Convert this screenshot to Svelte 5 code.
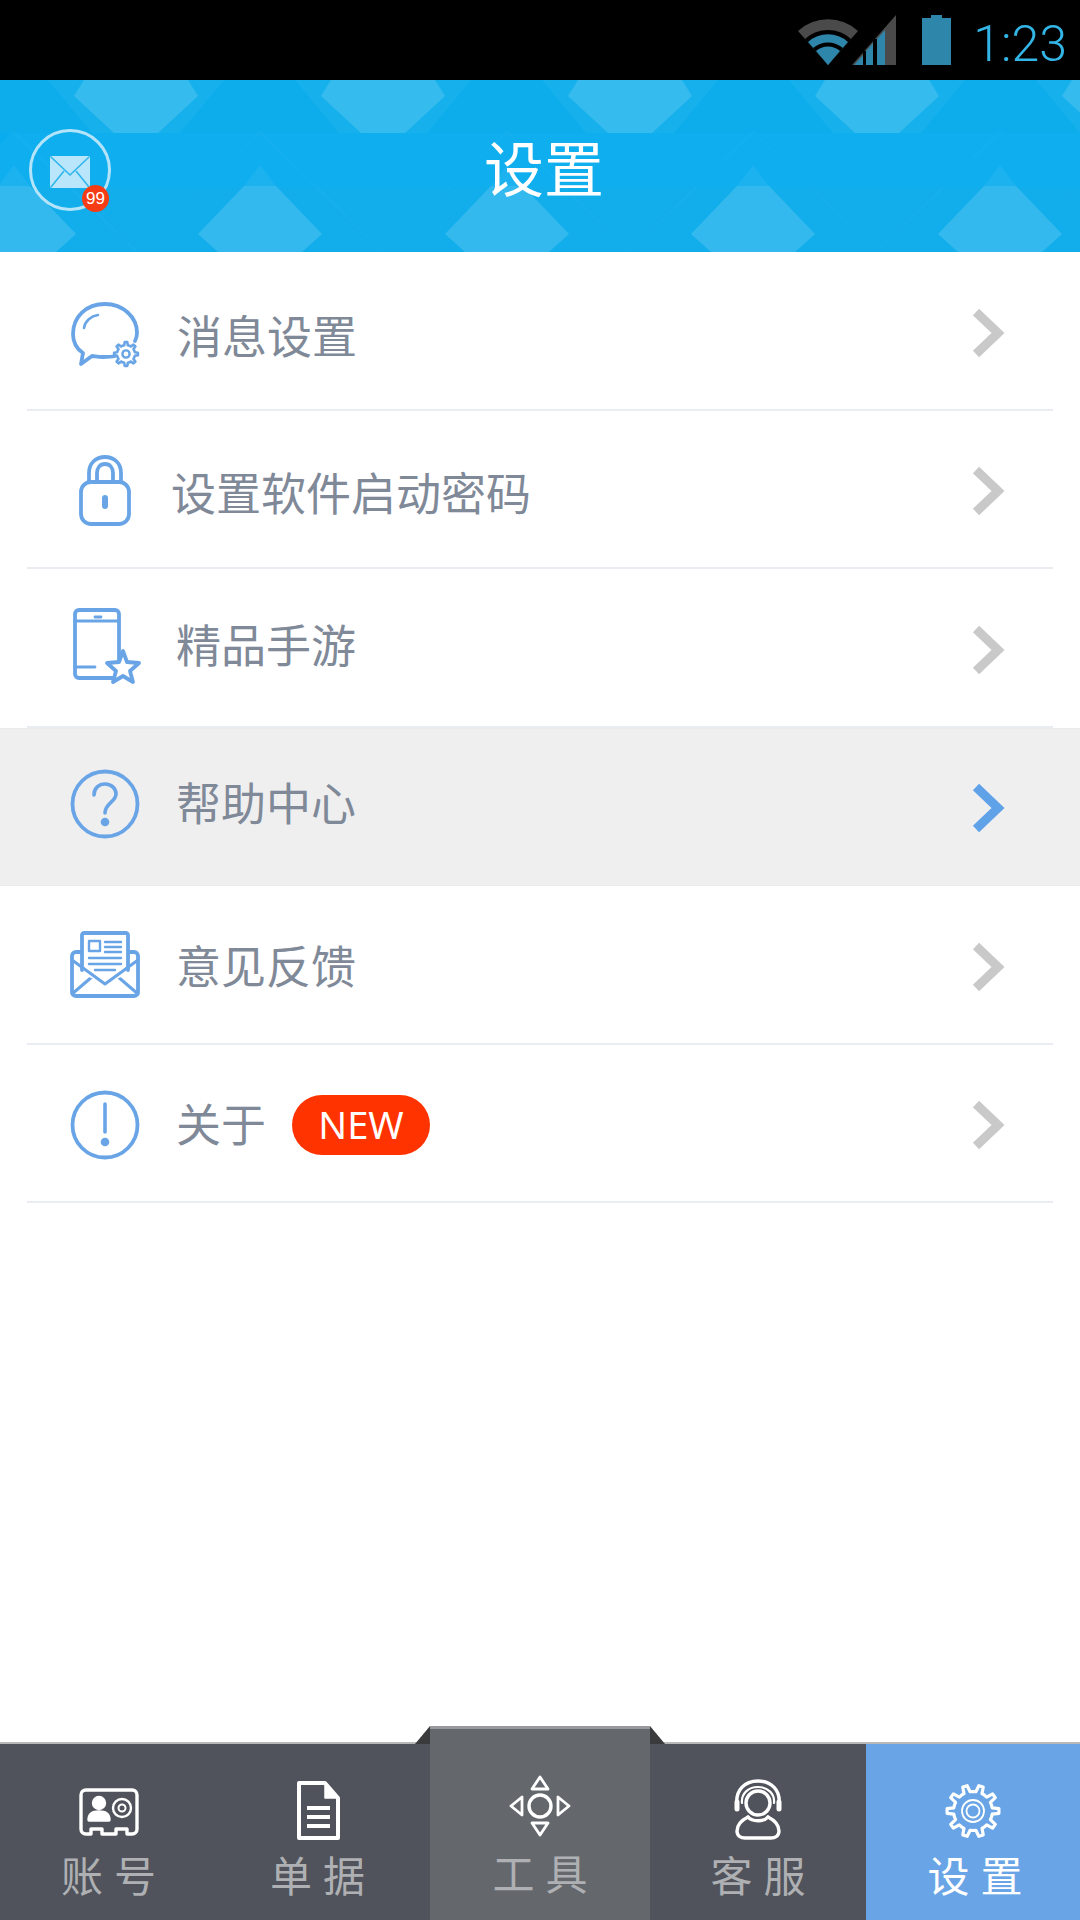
<script>
	const rows = [
		{ icon: 'chat', label: '消息设置', nudge: 2, textY: 2, iconY: 4 },
		{ icon: 'lock', label: '设置软件启动密码', nudge: -4, textY: 1, iconY: 0 },
		{ icon: 'phone', label: '精品手游', nudge: 1, textY: -6, iconY: -5 },
		{ icon: 'help', label: '帮助中心', nudge: 1, textY: -6, iconY: -4, active: true },
		{ icon: 'mail', label: '意见反馈', nudge: 1, textY: -2, iconY: -1 },
		{ icon: 'info', label: '关于', nudge: 1, textY: -2, iconY: 0, badge: 'NEW' }
	];

	const tabs = [
		{ icon: 'account', label: '账号', dx: 1 },
		{ icon: 'doc', label: '单据', dx: -5 },
		{ icon: 'tool', label: '工具', dx: 0, raised: true },
		{ icon: 'service', label: '客服', dx: 0 },
		{ icon: 'gear', label: '设置', dx: 2, current: true }
	];

	const topHexes = [136, 383, 630, 877, 1124];
	const lowHexes = [14, 260, 507, 753, 1000];

	function gearPath(cx, cy, outer, inner, teeth) {
		let d = '';
		const step = (Math.PI * 2) / teeth;
		for (let i = 0; i < teeth; i++) {
			const a = i * step;
			const pts = [
				[inner, a - step * 0.5],
				[inner, a - step * 0.26],
				[outer, a - step * 0.14],
				[outer, a + step * 0.14],
				[inner, a + step * 0.26]
			];
			for (const [r, t] of pts) {
				d += (d ? 'L' : 'M') + (cx + r * Math.cos(t)).toFixed(1) + ' ' + (cy + r * Math.sin(t)).toFixed(1);
			}
		}
		return d + 'Z';
	}
</script>

<div class="screen">
	<div class="status">
		<svg class="wifi" width="60" height="50" viewBox="0 0 60 50">
			<path d="M30 50 L0 16 A44 44 0 0 1 60 16 Z" fill="#4a4a4a" />
			<path d="M30 50 L7 24 A34 34 0 0 1 53 24 Z" fill="#000" />
			<path d="M30 50 L10 27 A30 30 0 0 1 50 27 Z" fill="#2f86ab" />
			<path d="M30 50 L15 33 A23 23 0 0 1 45 33 Z" fill="#000" />
			<path d="M30 50 L18 36 A18 18 0 0 1 42 36 Z" fill="#2f86ab" />
		</svg>
		<svg class="signal" width="44" height="50" viewBox="0 0 44 50">
			<path d="M0 50 L44 0 V50 Z" fill="#4a4a4a" />
			<path d="M2 50 L11 40 V50Z M14 50 V36 L21 28 V50Z M25 50 V24 L33 15 V50Z" fill="#2f86ab" />
			<path d="M11 50h3V36h-3Z M21 50h4V24h-4Z" fill="#000" />
		</svg>
		<div class="battery"></div>
		<span class="time">1:23</span>
	</div>

	<header class="head">
		<svg class="pattern" width="1080" height="172" viewBox="0 0 1080 172">
			<rect y="53" width="1080" height="54" fill="#00aef4" opacity="0.3" />
			{#each topHexes as x}
				<polygon points="{x - 124},53 {x},172 {x + 124},53" fill="#fff" opacity="0.025" />
				<polygon points="{x - 88},0 {x + 88},0 {x + 44},53 {x - 44},53" fill="#fff" opacity="0.04" />
				<polygon points="{x - 52},0 {x + 52},0 {x + 62},16 {x + 22},53 {x - 22},53 {x - 62},16" fill="#fff" opacity="0.14" />
			{/each}
			{#each lowHexes as x}
				<polygon points="{x - 124},172 {x},50 {x + 124},172" fill="#fff" opacity="0.025" />
				<polygon points="{x},85 {x + 16},106 {x - 16},106" fill="#fff" opacity="0.06" />
				<polygon points="{x - 16},106 {x + 16},106 {x + 62},154 {x + 42},172 {x - 42},172 {x - 62},154" fill="#fff" opacity="0.14" />
			{/each}
		</svg>
		<button class="inbox" aria-label="消息">
			<svg width="100" height="100" viewBox="0 0 100 100">
				<circle cx="42" cy="42" r="39.5" fill="none" stroke="#b4e4f9" stroke-width="3" />
				<rect x="22" y="28" width="40" height="32" rx="2" fill="#b9e6fa" />
				<path d="M23 29 L42 47 L61 29 M23 59 L36 43 M61 59 L48 43" fill="none" stroke="#2fb6ef" stroke-width="1.6" />
			</svg>
			<span class="dot">99</span>
		</button>
		<h1>设置</h1>
	</header>

	<main class="list">
		{#each rows as row}
			<div class="row" class:active={row.active}>
				<div class="row-inner">
					<svg class="row-icon" style:transform="translateY({row.iconY}px)" width="80" height="80" viewBox="0 0 80 80" fill="none" stroke="#69a5e6" stroke-width="3.8" stroke-linecap="round" stroke-linejoin="round">
						{#if row.icon === 'chat'}
							<path d="M50 59 C46 60 42 60 38 60 C33 60 29 59 27 59 L16 67 L18 56 C12 52 8 45 8 37 C8 20 21 7 40 7 C58 7 72 20 72 36 C72 39 71 42 70 44" />
							<path d="M19 31 C20 24 26 19 33 18" stroke-width="2.6" />
							<path d={gearPath(61, 57, 12, 9, 8)} stroke-width="2.6" />
							<circle cx="61" cy="57" r="3.6" stroke-width="2.4" />
						{:else if row.icon === 'lock'}
							<rect x="16" y="31" width="48" height="42" rx="10" />
							<path d="M24 31 V22 C24 12 31 6 40 6 C49 6 56 12 56 22 V31" />
							<path d="M32 31 V22 C32 17 35 13 40 13 C45 13 48 17 48 22 V31" />
							<path d="M40 47 V55" stroke-width="6" />
						{:else if row.icon === 'phone'}
							<rect x="10" y="5" width="44" height="68" rx="4" />
							<path d="M10 16 H54 M10 62 H30 M30 12h6" stroke-width="2.8" />
							<path fill="#fff" d="M58 46 L62 57 L74 58 L65 66 L68 77 L58 71 L48 77 L51 66 L42 58 L54 57 Z" />
						{:else if row.icon === 'help'}
							<circle cx="40" cy="40" r="32.5" />
							<path d="M29 31 C29 24 34 20 40 20 C47 20 51 25 51 30 C51 38 40 39 40 49" stroke-width="3.6" />
							<circle cx="40" cy="58" r="2.4" fill="#69a5e6" />
						{:else if row.icon === 'mail'}
							<rect x="7" y="26" width="66" height="44" rx="4" />
							<path d="M7 68 L28 50 M73 68 L52 50" stroke-width="3" />
							<path fill="#fff" d="M17 48 V9 C17 8 18 7 19 7 H61 C62 7 63 8 63 9 V48 L40 58 Z" stroke="none" />
							<path d="M17 44 V9 C17 8 18 7 19 7 H61 C62 7 63 8 63 9 V44" />
							<rect x="24" y="15" width="11" height="10" stroke-width="2.4" />
							<path d="M40 16 H56 M40 21 H56 M40 26 H56 M24 32 H56 M24 38 H56 M30 44 H50" stroke-width="2.4" />
							<path d="M7 34 L40 58 L73 34" stroke-width="3" />
						{:else if row.icon === 'info'}
							<circle cx="40" cy="40" r="32.5" />
							<path d="M40 19 V47" stroke-width="3.6" />
							<circle cx="40" cy="57" r="2.4" fill="#69a5e6" />
						{/if}
					</svg>
					<span class="label" style:margin-left="{row.nudge}px" style:transform="translateY({row.textY}px)">{row.label}</span>
					{#if row.badge}
						<span class="new">{row.badge}</span>
					{/if}
					<svg class="chevron" width="36" height="54" viewBox="0 0 36 54">
						<path d="M6 6 L28 27 L6 48" fill="none" stroke={row.active ? '#5fa2e8' : '#c9c9c9'} stroke-width="9" />
					</svg>
				</div>
			</div>
		{/each}
	</main>

	<nav class="tabs">
		{#each tabs as tab}
			<div class="tab" class:raised={tab.raised} class:current={tab.current}>
				<div class="tab-body" style:transform="translateX({tab.dx}px)">
					<svg width="80" height="70" viewBox="0 0 80 70" fill="none" stroke="#fff" stroke-width="3.4" stroke-linecap="round" stroke-linejoin="round">
						{#if tab.icon === 'account'}
							<path d="M17 14 H63 C66 14 68 16 68 19 V53 C68 56 66 58 63 58 H58 V53 H47 V58 H33 V53 H22 V58 H17 C14 58 12 56 12 53 V19 C12 16 14 14 17 14 Z" />
							<circle cx="30" cy="27" r="5.5" fill="#fff" />
							<path d="M20 44 C20 37 25 36 30 36 C35 36 40 37 40 44 Z" fill="#fff" />
							<circle cx="53" cy="32" r="9" stroke-width="2.4" />
							<circle cx="53" cy="32" r="3.5" stroke-width="2" />
						{:else if tab.icon === 'doc'}
							<path d="M21 7 H47 L60 22 V62 H21 Z" stroke-width="4" />
							<path d="M47 7 V22 H60" stroke-width="1.5" fill="#fff" />
							<path d="M29 32 H52 M29 41 H52 M29 50 H52" stroke-width="4" stroke-linecap="butt" />
						{:else if tab.icon === 'tool'}
							<circle cx="40" cy="32" r="11" />
							<path d="M40 3 L48 15 H32 Z M40 61 L48 49 H32 Z M11 32 L22 23 V41 Z M69 32 L58 23 V41 Z" stroke-width="2.8" />
						{:else if tab.icon === 'service'}
							<circle cx="40" cy="27" r="12" />
							<path d="M19 29 C17 14 27 5 40 5 C53 5 63 14 61 29" />
							<path d="M24 27 C23 18 30 11 40 11 C50 11 57 18 56 27" stroke-width="2.2" />
							<path d="M19 26 V33 M61 26 V33" stroke-width="5" />
							<path d="M30 41 C22 45 19 50 19 55 C19 60 23 62 27 62 H53 C57 62 61 60 61 55 C61 50 58 45 50 41" />
							<path d="M30 41 C34 46 46 46 50 41" />
						{:else if tab.icon === 'gear'}
							<path d={gearPath(38, 35, 26, 19.5, 10)} stroke-width="3.2" />
							<circle cx="38" cy="35" r="11" stroke-width="1.8" />
							<circle cx="38" cy="35" r="6.5" stroke-width="1.8" />
						{/if}
					</svg>
					<span class="tab-label">{tab.label}</span>
				</div>
			</div>
		{/each}
	</nav>
</div>

<style>
	:global(body) {
		margin: 0;
		background: #fff;
	}

	.screen {
		width: 1080px;
		height: 1920px;
		display: flex;
		flex-direction: column;
		overflow: hidden;
		font-family: 'Noto Sans CJK SC', 'Noto Sans', sans-serif;
	}

	.status {
		height: 80px;
		flex: none;
		box-sizing: border-box;
		background: #000;
		display: flex;
		align-items: flex-start;
		justify-content: flex-end;
		padding: 15px 13px 0 0;
	}

	.wifi {
		margin-right: -6px;
	}

	.battery {
		position: relative;
		width: 29px;
		height: 47px;
		margin: 3px 0 0 26px;
		background: #2f86ab;
	}

	.battery::before {
		content: '';
		position: absolute;
		top: -3px;
		left: 9px;
		width: 11px;
		height: 3px;
		background: #2f86ab;
	}

	.time {
		margin-left: 22px;
		font-family: Roboto, sans-serif;
		font-weight: 300;
		font-size: 50px;
		line-height: 58px;
		color: #33b5e5;
	}

	.head {
		position: relative;
		height: 172px;
		flex: none;
		background: #0dadec;
		display: flex;
		align-items: center;
		justify-content: center;
		overflow: hidden;
	}

	.pattern {
		position: absolute;
		top: 0;
		left: 0;
	}

	.head h1 {
		position: relative;
		margin: 0 0 0 8px;
		font-size: 60px;
		font-weight: 400;
		color: #fff;
		line-height: 70px;
	}

	.inbox {
		position: absolute;
		left: 28px;
		top: 48px;
		width: 100px;
		height: 100px;
		padding: 0;
		border: 0;
		background: none;
	}

	.inbox svg {
		display: block;
	}

	.dot {
		position: absolute;
		left: 54px;
		top: 57px;
		width: 27px;
		height: 27px;
		border-radius: 50%;
		background: #f63c14;
		color: #fff;
		font-size: 17px;
		line-height: 27px;
		text-align: center;
	}

	.list {
		flex: 1;
		min-height: 0;
	}

	.row {
		height: 158.5px;
		box-sizing: border-box;
	}

	.row-inner {
		height: 100%;
		box-sizing: border-box;
		margin: 0 27px;
		padding: 5px 0 0 38px;
		border-bottom: 2px solid #e9ecf0;
		display: flex;
		align-items: center;
	}

	.row.active {
		background: #efeff0;
		box-shadow: inset 0 1px 0 #e9e9ee, inset 0 -1px 0 #e9e9ee;
	}

	.row.active .row-inner {
		border-bottom-color: transparent;
	}

	.row-icon {
		flex: none;
	}

	.label {
		padding-left: 30px;
		font-size: 45px;
		font-weight: 400;
		line-height: 60px;
		color: #7f8998;
	}

	.new {
		margin-left: 26px;
		width: 138px;
		height: 60px;
		border-radius: 30px;
		background: #ff3300;
		color: #fff;
		font-family: 'Noto Sans', sans-serif;
		font-size: 38px;
		line-height: 58px;
		text-align: center;
	}

	.chevron {
		margin-left: auto;
		margin-right: 47px;
	}

	.tabs {
		height: 178px;
		flex: none;
		box-sizing: border-box;
		display: flex;
		background: #50535b;
		border-top: 2px solid #b6b8ba;
	}

	.tab {
		flex: 0 0 215px;
		position: relative;
		box-sizing: border-box;
		padding-top: 32px;
	}

	.tab-body {
		display: flex;
		flex-direction: column;
		align-items: center;
	}

	.tab svg {
		display: block;
	}

	.tab-label {
		margin-top: 2px;
		padding-left: 11px;
		font-size: 42px;
		font-weight: 400;
		letter-spacing: 11px;
		line-height: 52px;
		color: #aeb0b3;
	}

	.tab.raised {
		flex-basis: 220px;
		background: #64676c;
		border-top: 3px solid #98999c;
		margin-top: -18px;
		padding-top: 45px;
	}

	.tab.raised + .tab {
		flex-basis: 216px;
	}

	.tab.raised::before,
	.tab.raised::after {
		content: '';
		position: absolute;
		top: -3px;
		width: 15px;
		height: 18px;
		background: #3b3b3d;
	}

	.tab.raised::before {
		left: -15px;
		clip-path: polygon(100% 0, 100% 100%, 0 100%);
	}

	.tab.raised::after {
		right: -15px;
		clip-path: polygon(0 0, 100% 100%, 0 100%);
	}

	.tab.current {
		flex: 1;
		background: #69a5e6;
	}

	.tab.current .tab-label {
		color: #fff;
	}
</style>
